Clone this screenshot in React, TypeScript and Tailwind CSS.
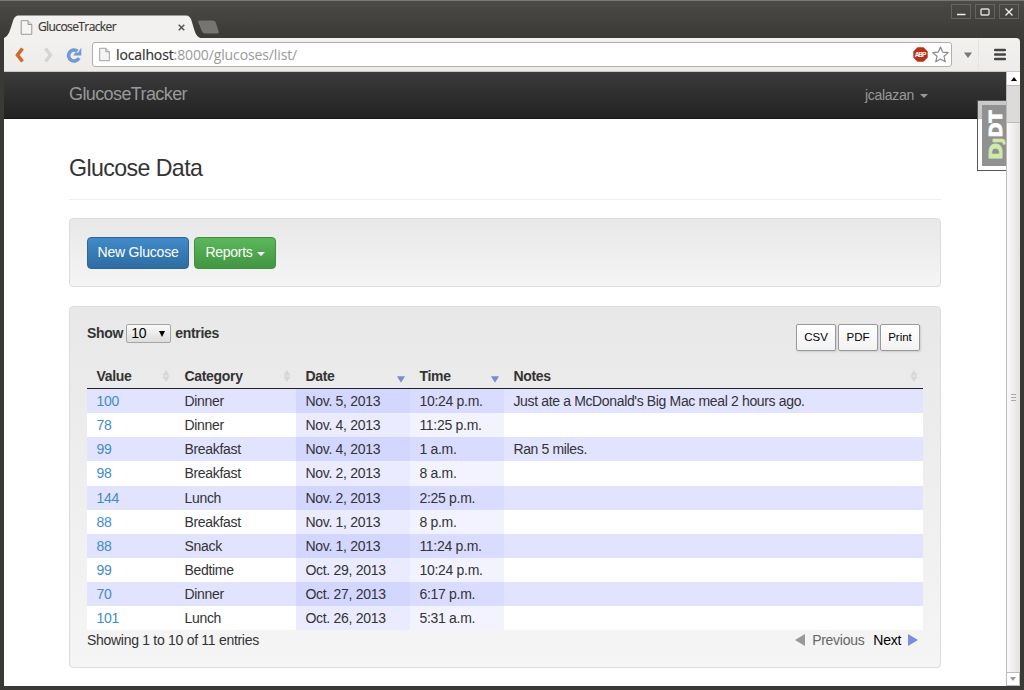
import React from 'react'

const entries = [
  { value: '100', category: 'Dinner', date: 'Nov. 5, 2013', time: '10:24 p.m.', notes: "Just ate a McDonald's Big Mac meal 2 hours ago." },
  { value: '78', category: 'Dinner', date: 'Nov. 4, 2013', time: '11:25 p.m.', notes: '' },
  { value: '99', category: 'Breakfast', date: 'Nov. 4, 2013', time: '1 a.m.', notes: 'Ran 5 miles.' },
  { value: '98', category: 'Breakfast', date: 'Nov. 2, 2013', time: '8 a.m.', notes: '' },
  { value: '144', category: 'Lunch', date: 'Nov. 2, 2013', time: '2:25 p.m.', notes: '' },
  { value: '88', category: 'Breakfast', date: 'Nov. 1, 2013', time: '8 p.m.', notes: '' },
  { value: '88', category: 'Snack', date: 'Nov. 1, 2013', time: '11:24 p.m.', notes: '' },
  { value: '99', category: 'Bedtime', date: 'Oct. 29, 2013', time: '10:24 p.m.', notes: '' },
  { value: '70', category: 'Dinner', date: 'Oct. 27, 2013', time: '6:17 p.m.', notes: '' },
  { value: '101', category: 'Lunch', date: 'Oct. 26, 2013', time: '5:31 a.m.', notes: '' },
]

const columns = [
  { name: 'Value', sorted: false },
  { name: 'Category', sorted: false },
  { name: 'Date', sorted: true },
  { name: 'Time', sorted: true },
  { name: 'Notes', sorted: false },
]

const columnWidths = 'grid grid-cols-[88px_121px_114px_94px_1fr]'

function PageIcon({ className }: { className: string }) {
  return (
    <svg className={className} viewBox="0 0 12 15" fill="#f4f4f4" stroke="#999">
      <path d="M.7.7h6.8l3.8 3.8v9.8H.7z" />
      <path d="M7.5.7v3.8h3.8" fill="#ddd" />
    </svg>
  )
}

function SortIcon({ sorted }: { sorted: boolean }) {
  if (sorted) {
    return (
      <svg className="w-2 h-[7px] mt-[7px] mr-[5px]" viewBox="0 0 8 7">
        <path d="M0 .3h8L4 6.8z" fill="#7a8bd4" />
      </svg>
    )
  }
  return (
    <svg className="w-2 h-3 mr-[5px]" viewBox="0 0 8 12" fill="#d6d6d6">
      <path d="M4 0l3.500 5.500h-7z" />
      <path d="M4 12L.5 6.500h7z" />
    </svg>
  )
}

function TitleBar() {
  return (
    <div className="relative h-[38px] shrink-0">
      <svg className="absolute left-0 top-0 w-[240px] h-[38px]" viewBox="0 0 240 38">
        <path d="M4 38C9 36 10 30 13 21c1.300-4 3-5.500 6-5.500h167c3 0 4.500 2 5.500 5 3 10 4 16 9 17.500z" fill="#f3f1f0" />
        <path d="M199 20.500h14q2 0 2.700 2l3 9q.6 2-1.500 2h-12q-2.500 0-3.400-2.500l-3.400-8.500q-.7-2 .6-2z" fill="#777572" />
      </svg>
      <div className="relative flex items-center h-6 top-[15px] ml-5 w-[166px]">
        <PageIcon className="w-[13px] h-[15px]" />
        <span className="ml-[5px] w-[78px] font-['Open_Sans',sans-serif] text-[12px] tracking-[-0.600px] text-[#3c3b37] [-webkit-text-stroke:0.200px_#3c3b37]">GlucoseTracker</span>
        <svg className="ml-auto mr-[1.500px] w-[7px] h-[7px]" viewBox="0 0 7 7">
          <path d="M.7.7l5.600 5.600M6.300.7L.7 6.300" stroke="#555" strokeWidth="1.500" />
        </svg>
      </div>
      <div className="absolute right-[5px] top-1 flex gap-[4px]">
        <span className="flex items-center justify-center w-5 h-[15px] border border-[#66645e]">
          <svg className="w-3 h-3" viewBox="0 0 12 12"><path d="M2 8.500h8.500" stroke="#eee" strokeWidth="1.500" /></svg>
        </span>
        <span className="flex items-center justify-center w-5 h-[15px] border border-[#66645e]">
          <svg className="w-3 h-3" viewBox="0 0 12 12"><rect x="2" y="3" width="8" height="6" rx="1" fill="none" stroke="#ddd" strokeWidth="1.400" /></svg>
        </span>
        <span className="flex items-center justify-center w-5 h-[15px] border border-[#66645e]">
          <svg className="w-3 h-3" viewBox="0 0 12 12"><path d="M2.500 2.500l7 7M9.500 2.500l-7 7" stroke="#eee" strokeWidth="1.400" /></svg>
        </span>
      </div>
    </div>
  )
}

function Toolbar() {
  return (
    <div className="flex items-center h-[34px] shrink-0 bg-linear-to-b from-[#f3f1f0] to-[#eeecea] rounded-tr-sm border-b border-[#c9c7c4]">
      <svg className="ml-[10px] w-[11px] h-4" viewBox="0 0 11 16">
        <path d="M8.500 1.500L3.500 8l5 6.500" fill="none" stroke="#d0692c" strokeWidth="3.600" />
      </svg>
      <svg className="ml-[18px] w-[11px] h-4" viewBox="0 0 11 16">
        <path d="M2.500 1.500L7.500 8l-5 6.500" fill="none" stroke="#d6d4d2" strokeWidth="3.400" />
      </svg>
      <svg className="ml-[12px] w-4 h-4" viewBox="0 0 16 16">
        <path d="M11.500 4.200A5.500 5.500 0 1 0 13 11" fill="none" stroke="#6d9bd6" strokeWidth="3.600" />
        <path d="M15.300.5v8H7.300l2-3h3z" fill="#6d9bd6" />
      </svg>
      <div className="flex items-center ml-[10px] w-[860px] h-[25px] bg-white border border-[#b3b0ac] rounded-[3px]">
        <PageIcon className="ml-[6px] w-[11px] h-[15px]" />
        <span className="ml-[6px] font-['Open_Sans',sans-serif] text-[14px] tracking-[-0.120px] whitespace-nowrap text-[#999]">
          <span className="text-[#333] [-webkit-text-stroke:0.200px_#333]">localhost</span>:8000/glucoses/list/
        </span>
        <svg className="ml-auto w-[15px] h-[15px]" viewBox="0 0 15 15">
          <path d="M4.500.3h6l4.200 4.200v6l-4.200 4.200h-6L.3 10.500v-6z" fill="#bd3018" />
          <text x="7.500" y="10" textAnchor="middle" fontFamily="Liberation Sans, sans-serif" fontWeight="bold" fontSize="6.500" textLength="11.500" fill="#fff">ABP</text>
        </svg>
        <svg className="ml-1 mr-[2px] w-[17px] h-[17px]" viewBox="0 0 17 17">
          <path d="M8.500 1l2.200 5.100 5.500.5-4.200 3.700 1.300 5.500-4.800-2.900-4.800 2.900L5 10.300.8 6.600l5.500-.5z" fill="#fff" stroke="#8b8b8b" strokeWidth="1.200" strokeLinejoin="round" />
        </svg>
      </div>
      <svg className="ml-[12px] mt-px w-2 h-[6px]" viewBox="0 0 8 6"><path d="M0 .5h8L4 6z" fill="#777" /></svg>
      <span className="ml-[6px] h-[31px] w-px bg-[#e5e3e1]" />
      <svg className="ml-[15px] w-3 h-[13px]" viewBox="0 0 12 13">
        <path d="M1 2h10M1 6.500h10M1 11h10" stroke="#444" strokeWidth="2.300" strokeLinecap="round" />
      </svg>
    </div>
  )
}

function Navbar() {
  return (
    <div className="flex items-center justify-between h-[47px] pl-[65px] pr-[78px] bg-linear-to-b from-[#3b3b3b] to-[#222] border-b border-[#161616] text-[#999]">
      <span className="mb-px text-[18px] tracking-[-0.600px]">GlucoseTracker</span>
      <span className="flex items-center">
        jcalazan
        <span className="ml-[6px] mt-[2px] border-x-4 border-t-4 border-x-transparent border-t-[#999]" />
      </span>
    </div>
  )
}

function DebugHandle() {
  return (
    <div className="absolute right-0 top-[28px] w-[29px] h-[71px] border border-r-0 border-[#555] bg-white/75 py-[4px] pl-[4px]">
      <svg className="block w-6 h-[61px] bg-[#919191]" viewBox="0 0 24 61">
        <g transform="translate(19.500 55) rotate(-90)" fontFamily="DejaVu Sans, sans-serif" fontWeight="bold" fontSize="18" strokeWidth=".8">
          <text fill="#d0eaad" stroke="#d0eaad" textLength="22" lengthAdjust="spacingAndGlyphs">D<tspan fontSize="13">J</tspan></text>
          <text x="22.500" fill="#fff" stroke="#fff" textLength="27" lengthAdjust="spacingAndGlyphs">DT</text>
        </g>
      </svg>
    </div>
  )
}

function Scrollbar() {
  return (
    <div className="flex flex-col w-[14px] shrink-0 bg-[#f1f0ef] border-l border-[#bbb]">
      <div className="flex items-center justify-center h-[14px] bg-white border-b border-[#bbb]">
        <span className="border-x-[3.500px] border-b-4 border-x-transparent border-b-black" />
      </div>
      <div className="h-[37px] bg-[#dcdbda] border-b border-[#bbb]" />
      <div className="flex flex-1 flex-col items-center justify-center gap-[2px] bg-linear-to-r from-[#fafafa] to-[#e4e2e0]">
        <span className="w-[5px] h-px bg-[#aaa]" />
        <span className="w-[5px] h-px bg-[#aaa]" />
        <span className="w-[5px] h-px bg-[#aaa]" />
      </div>
      <div className="flex items-center justify-center h-[14px] bg-white border border-l-0 border-[#bbb]">
        <span className="border-x-[3.500px] border-t-4 border-x-transparent border-t-[#999]" />
      </div>
    </div>
  )
}

function GlucoseTable() {
  return (
    <div className="w-[836px]">
      <div className={`${columnWidths} h-[26px] border-b border-[#222] font-bold`}>
        {columns.map((column) => (
          <div key={column.name} className="flex items-center justify-between pl-[9.400px] pt-px">
            {column.name}
            <SortIcon sorted={column.sorted} />
          </div>
        ))}
      </div>
      {entries.map((entry, i) => (
        <div
          key={i}
          className={`${columnWidths} h-[24.150px] leading-[24px] ${i % 2 === 0 ? 'bg-[#e2e4ff]' : 'bg-white'}`}
        >
          <div className="pl-[9.400px] text-[#428bca]">{entry.value}</div>
          <div className="pl-[9.400px]">{entry.category}</div>
          <div className={`pl-[9.400px] ${i % 2 === 0 ? 'bg-[#d3d6ff]' : 'bg-[#eaebff]'}`}>{entry.date}</div>
          <div className={`pl-[9.400px] ${i % 2 === 0 ? 'bg-[#dadcff]' : 'bg-[#f2f3ff]'}`}>{entry.time}</div>
          <div className="pl-[9.400px] tracking-[-0.350px]">{entry.notes}</div>
        </div>
      ))}
    </div>
  )
}

export default function App() {
  return (
    <div className="flex flex-col w-[1024px] h-[690px] overflow-hidden px-1 pb-1 bg-[#3c3b37] bg-linear-to-b from-[#4b4a46] to-[#3a3935] to-[38px] border-t border-[#777]">
      <div className="-mx-1 -mt-px flex flex-col">
        <TitleBar />
      </div>
      <Toolbar />
      <div className="flex flex-1 min-h-0 bg-white font-['Liberation_Sans',Arial,sans-serif] text-[14px] tracking-[-0.290px] text-[#333]">
        <div className="relative flex-1">
          <Navbar />
          <DebugHandle />
          <div className="ml-[65px] w-[872px]">
            <h1 className="h-[81px] pt-[34px] text-[23.200px] tracking-[-0.600px] leading-[30px] border-b border-[#eee]">Glucose Data</h1>
            <div className="flex gap-[5px] mt-[18px] h-[69px] p-[17px] rounded-[4px] border border-[#dcdcdc] bg-linear-to-b from-[#e8e8e8] to-[#f5f5f5] text-white">
              <button className="mt-px pb-px w-[102px] h-8 rounded-[4px] border border-[#2b669a] bg-linear-to-b from-[#428bca] to-[#2d6ca2] tracking-[-0.200px]">New Glucose</button>
              <button className="mt-px pb-px flex items-center justify-center w-[82px] h-8 rounded-[4px] border border-[#3e8f3e] bg-linear-to-b from-[#5cb85c] to-[#419641]">
                Reports
                <span className="ml-1 mt-[2px] border-x-4 border-t-4 border-x-transparent border-t-white" />
              </button>
            </div>
            <div className="mt-[19px] h-[362px] px-[17px] pt-[17px] rounded-[4px] border border-[#dcdcdc] bg-linear-to-b from-[#e8e8e8] to-[#f5f5f5]">
              <div className="flex justify-between h-[39px]">
                <div className="flex items-center h-[19px] font-bold">
                  Show
                  <span className="flex items-center justify-between ml-[3px] mr-1 w-[45px] h-[19px] pl-1 pr-[5px] border border-[#a5a5a5] rounded-[2px] bg-linear-to-b from-[#fafafa] to-[#ddd] font-normal text-black">
                    10
                    <span className="border-x-[3px] border-t-[6px] border-x-transparent border-t-black" />
                  </span>
                  entries
                </div>
                <div className="flex gap-[2px] mr-[3px] text-[11.500px] tracking-normal text-black">
                  <button className="w-10 h-[27px] border border-[#999] rounded-[2px] bg-linear-to-b from-white to-[#f2f2f2] shadow-[1px_1px_2px_#ccc]">CSV</button>
                  <button className="w-10 h-[27px] border border-[#999] rounded-[2px] bg-linear-to-b from-white to-[#f2f2f2] shadow-[1px_1px_2px_#ccc]">PDF</button>
                  <button className="w-10 h-[27px] border border-[#999] rounded-[2px] bg-linear-to-b from-white to-[#f2f2f2] shadow-[1px_1px_2px_#ccc]">Print</button>
                </div>
              </div>
              <GlucoseTable />
              <div className="flex items-center h-[20px]">
                <span>Showing 1 to 10 of 11 entries</span>
                <svg className="ml-auto w-[10px] h-3" viewBox="0 0 10 12"><path d="M10 0v12L0 6z" fill="#999" /></svg>
                <span className="ml-[7px] text-[#666]">Previous</span>
                <span className="ml-[9px] text-black">Next</span>
                <svg className="ml-[7px] mr-[5px] w-[10px] h-3" viewBox="0 0 10 12"><path d="M0 0v12l10-6z" fill="#7d8ddd" /></svg>
              </div>
            </div>
          </div>
        </div>
        <Scrollbar />
      </div>
    </div>
  )
}
